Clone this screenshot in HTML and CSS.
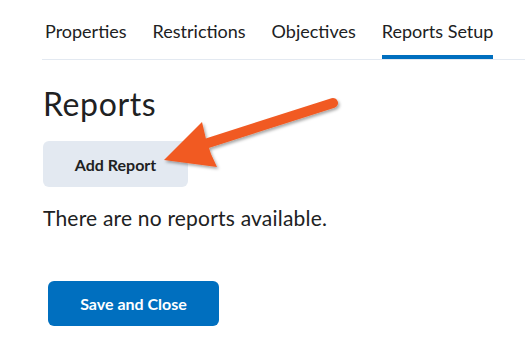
FILE: index.html
```html
<!DOCTYPE html>
<html lang="en">
<head>
<meta charset="utf-8">
<title>Reports Setup</title>
<link rel="stylesheet" href="styles.css">
</head>
<body>
<div class="page">
  <nav class="tabs">
    <span class="tab">Properties</span>
    <span class="tab">Restrictions</span>
    <span class="tab">Objectives</span>
    <span class="tab active">Reports Setup</span>
  </nav>
  <h1 class="title">Reports</h1>
  <button class="btn-secondary">Add Report</button>
  <p class="empty">There are no reports available.</p>
  <button class="btn-primary">Save and Close</button>
  <svg class="arrow" width="525" height="344" viewBox="0 0 525 344">
    <defs>
      <filter id="sh" x="-20%" y="-20%" width="140%" height="140%">
        <feDropShadow dx="1.5" dy="2" stdDeviation="1.5" flood-color="#000" flood-opacity="0.35"/>
      </filter>
    </defs>
    <g filter="url(#sh)" fill="#f15a22">
      <path d="M333 103 L208 143" stroke="#f15a22" stroke-width="10" stroke-linecap="round"/>
      <path d="M164 160 L202 122 L206 139 L211 154 L217 167 Z"/>
    </g>
  </svg>
</div>
</body>
</html>
```
FILE: styles.css
```css
* { box-sizing: border-box; }
html, body { margin: 0; padding: 0; background: #fff; }
body {
  font-family: Lato, "Noto Sans", sans-serif;
  color: #202122;
}
.page {
  position: relative;
  width: 525px;
  height: 344px;
  overflow: hidden;
  padding-left: 42px;
}
.tabs {
  display: flex;
  gap: 26px;
  padding: 20px 0 0 3px;
  border-bottom: 1px solid #e3e9f1;
}
.tab {
  font-size: 18px;
  line-height: 22px;
  padding-bottom: 13px;
  border-bottom: 4px solid transparent;
  white-space: nowrap;
}
.tab.active {
  border-bottom-color: #006fbf;
  border-radius: 3px 3px 0 0;
}
.title {
  margin: 26px 0 0 1px;
  font-size: 32px;
  line-height: 36px;
  font-weight: 400;
  letter-spacing: 0.6px;
}
.btn-secondary {
  display: block;
  margin: 19px 0 0 1px;
  width: 145px;
  height: 46px;
  border: none;
  border-radius: 6px;
  background: #e3e9f1;
  color: #202122;
  font-family: Lato, sans-serif;
  font-weight: 700;
  font-size: 16px;
}
.empty {
  margin: 18px 0 0 1px;
  font-size: 21px;
  line-height: 25px;
  letter-spacing: 0.2px;
}
.btn-primary {
  display: block;
  margin: 51px 0 0 6px;
  width: 171px;
  height: 45px;
  border: none;
  border-radius: 6px;
  background: #006fbf;
  color: #fff;
  font-family: Lato, sans-serif;
  font-weight: 700;
  font-size: 16px;
}
.arrow {
  position: absolute;
  left: 0;
  top: 0;
  pointer-events: none;
}
```
